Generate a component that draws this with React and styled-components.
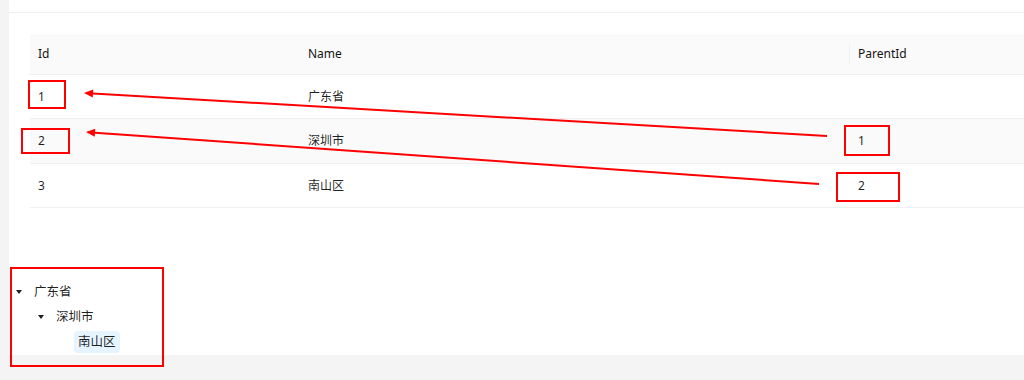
import React from "react";
import styled, { createGlobalStyle } from "styled-components";

const Global = createGlobalStyle`
  html, body { margin: 0; padding: 0; }
  body {
    background: #f4f4f4;
    font-family: "Noto Sans", "Noto Sans CJK SC", sans-serif;
    font-size: 12px;
    color: rgba(0, 0, 0, 0.88);
  }
`;

const Page = styled.div`
  position: relative;
  width: 1024px;
  height: 380px;
  overflow: hidden;
`;

const Panel = styled.div`
  margin-left: 9px;
  height: 355px;
  background: #fff;
  display: flex;
  flex-direction: column;
`;

const TopBar = styled.div`
  flex: none;
  height: 12px;
  border-bottom: 1px solid #f0f0f0;
`;

const Body = styled.div`
  padding: 21px 0 0 21px;
  flex: 1;
  min-height: 0;
  display: flex;
  flex-direction: column;
`;

const Table = styled.table`
  flex: none;
  width: 994px;
  border-collapse: collapse;
  table-layout: fixed;
`;

const Th = styled.th`
  position: relative;
  height: 40px;
  padding: 0 8px;
  text-align: left;
  font-weight: 400;
  color: #141414;
  background: #fafafa;
  border-bottom: 1px solid #f0f0f0;
  line-height: 16px;
  &::after {
    content: "";
    display: ${(p) => (p.$divider ? "block" : "none")};
    position: absolute;
    right: 0;
    top: 10px;
    height: 19px;
    width: 1px;
    background: #f0f0f0;
  }
`;

const Tr = styled.tr`
  background: ${(p) => (p.$striped ? "#fafafa" : "#fff")};
`;

const Td = styled.td`
  height: ${(p) => (p.$tall ? 44 : 43)}px;
  padding: 0 8px;
  border-bottom: 1px solid #f0f0f0;
  line-height: 16px;
`;

const Tree = styled.ul`
  flex: none;
  list-style: none;
  margin: 71px 0 0 -21px;
  padding: 0;
  display: flex;
  flex-direction: column;
`;

const Node = styled.li`
  height: 25px;
  display: flex;
  align-items: center;
  padding-left: ${(p) => 1 + p.$level * 22}px;
`;

const Switcher = styled.span`
  width: 18px;
  height: 18px;
  display: flex;
  align-items: center;
  justify-content: center;
  margin-right: 2px;
`;

const Caret = styled.span`
  width: 0;
  height: 0;
  border-left: 3.5px solid transparent;
  border-right: 3.5px solid transparent;
  border-top: 4px solid rgba(0, 0, 0, 0.88);
`;

const Title = styled.span`
  padding: 0 4px;
  height: 22px;
  line-height: 22px;
  border-radius: 4px;
  font-size: 12.5px;
  background: ${(p) => (p.$selected ? "#e6f4ff" : "transparent")};
`;

const Marks = styled.svg`
  position: absolute;
  left: 0;
  top: 0;
  pointer-events: none;
`;

const rows = [
  { id: 1, name: "广东省", parent: "" },
  { id: 2, name: "深圳市", parent: 1 },
  { id: 3, name: "南山区", parent: 2 },
];

const treeNodes = [
  { title: "广东省", level: 0, open: true },
  { title: "深圳市", level: 1, open: true },
  { title: "南山区", level: 2, leaf: true, selected: true },
];

function Arrow({ from, to }) {
  const [x1, y1] = from;
  const [x2, y2] = to;
  const ang = Math.atan2(y2 - y1, x2 - x1);
  const len = 9;
  const w = 4;
  const bx = x2 - Math.cos(ang) * len;
  const by = y2 - Math.sin(ang) * len;
  const px = -Math.sin(ang) * w;
  const py = Math.cos(ang) * w;
  return (
    <g>
      <line x1={x1} y1={y1} x2={bx} y2={by} stroke="#ff0000" strokeWidth="2" />
      <polygon
        points={`${x2},${y2} ${bx + px},${by + py} ${bx - px},${by - py}`}
        fill="#ff0000"
      />
    </g>
  );
}

export default function App() {
  return (
    <Page>
      <Global />
      <Panel>
        <TopBar />
        <Body>
          <Table>
            <colgroup>
              <col style={{ width: 270 }} />
              <col style={{ width: 550 }} />
              <col />
            </colgroup>
            <thead>
              <tr>
                <Th>Id</Th>
                <Th $divider>Name</Th>
                <Th>ParentId</Th>
              </tr>
            </thead>
            <tbody>
              {rows.map((r, i) => (
                <Tr key={r.id} $striped={i === 1}>
                  <Td $tall={i === 1}>{r.id}</Td>
                  <Td $tall={i === 1}>{r.name}</Td>
                  <Td $tall={i === 1}>{r.parent}</Td>
                </Tr>
              ))}
            </tbody>
          </Table>
          <Tree>
            {treeNodes.map((n) => (
              <Node key={n.title} $level={n.level}>
                <Switcher>{!n.leaf && <Caret />}</Switcher>
                <Title $selected={n.selected}>{n.title}</Title>
              </Node>
            ))}
          </Tree>
        </Body>
      </Panel>
      <Marks width="1024" height="380" viewBox="0 0 1024 380">
        <g fill="none" stroke="#ff0000" strokeWidth="2">
          <rect x="29" y="81" width="36" height="27" />
          <rect x="22" y="129" width="47" height="24" />
          <rect x="845" y="126" width="44" height="29" />
          <rect x="837" y="173" width="62" height="28" />
          <rect x="11" y="268" width="152" height="98" />
        </g>
        <Arrow from={[827, 136]} to={[84, 93]} />
        <Arrow from={[819, 184]} to={[86, 132]} />
      </Marks>
    </Page>
  );
}
